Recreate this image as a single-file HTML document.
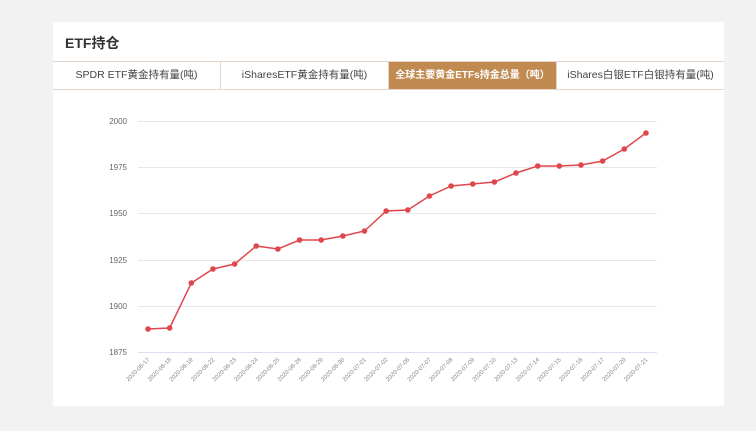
<!DOCTYPE html><html><head><style>
body{margin:0;width:756px;height:431px;background:#f2f2f2;font-family:"Liberation Sans","Noto Sans CJK SC",sans-serif;overflow:hidden}
.card{position:absolute;left:53px;top:22px;width:671px;height:384px;background:#fff}
.h{position:absolute;left:12px;top:11px;font-size:14px;font-weight:bold;color:#333}
.tabs{position:absolute;left:0;top:39px;width:671px;height:27px;border-top:1px solid #e3d6c8;border-bottom:1px solid #e3d6c8;display:flex}
.tabs div{flex:1;text-align:center;line-height:27px;font-size:10.5px;color:#444;border-right:1px solid #e3d6c8;white-space:nowrap;overflow:hidden}
.tabs div:last-child{border-right:none}
.tabs .a{background:#c08a50;color:#fff;font-weight:bold;font-size:10px}
</style></head><body>
<div class="card"><div class="h">ETF持仓</div>
<div class="tabs"><div>SPDR ETF黄金持有量(吨)</div><div>iSharesETF黄金持有量(吨)</div><div class="a">全球主要黄金ETFs持金总量（吨）</div><div>iShares白银ETF白银持有量(吨)</div></div></div>
<svg width="756" height="431" style="position:absolute;left:0;top:0" font-family="Liberation Sans, sans-serif">
<g stroke="#e8e8e8" stroke-width="1">
<line x1="138" x2="657" y1="121.5" y2="121.5"/><line x1="138" x2="657" y1="167.5" y2="167.5"/><line x1="138" x2="657" y1="213.5" y2="213.5"/><line x1="138" x2="657" y1="260.5" y2="260.5"/><line x1="138" x2="657" y1="306.5" y2="306.5"/><line x1="138" x2="657" y1="352.5" y2="352.5" stroke="#dde"/></g>
<g font-size="8" fill="#666" text-anchor="end">
<text x="127" y="124">2000</text><text x="127" y="170">1975</text><text x="127" y="216">1950</text><text x="127" y="263">1925</text><text x="127" y="309">1900</text><text x="127" y="355">1875</text></g>
<g id="lbl" font-size="6" fill="#888" text-anchor="end"></g>
<polyline id="pl" fill="none" stroke="#e0474c" stroke-width="1.5"/>
<g id="pts" fill="#e0474c"></g>
</svg>
<script>
var ys=[329,328,283,269,264,246,249,240,240,236,231,211,210,196,186,184,182,173,166,166,165,161,149,133];
var ds=["06-17","06-18","06-19","06-22","06-23","06-24","06-25","06-26","06-29","06-30","07-01","07-02","07-06","07-07","07-08","07-09","07-10","07-13","07-14","07-15","07-16","07-17","07-20","07-21"];
var pts=[],g=document.getElementById('pts'),l=document.getElementById('lbl'),s='';
for(var i=0;i<24;i++){var x=148+i*21.65;pts.push(x+','+ys[i]);
s+='<circle cx="'+x+'" cy="'+ys[i]+'" r="2.8"/>';
l.innerHTML+='<text transform="translate('+(x+2)+',360) rotate(-45)">2020-'+ds[i]+'</text>';}
g.innerHTML=s;document.getElementById('pl').setAttribute('points',pts.join(' '));
</script>
</body></html>
